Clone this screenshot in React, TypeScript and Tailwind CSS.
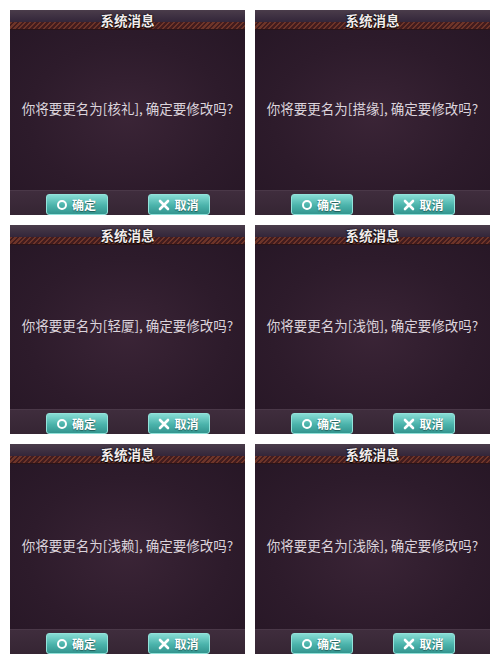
import React from 'react';

const names = ['核礼', '搭缘', '轻厦', '浅饱', '浅赖', '浅除'];
const rowHeights = ['h-[205px]', 'h-[209px]', 'h-[210px]'];

const Panel: React.FC<{ name: string; height: string }> = ({ name, height }) => (
  <div className={`${height} flex flex-col overflow-hidden bg-[#2c1b2a]`}>
    {/* Title bar */}
    <div className="relative h-[20px] shrink-0 flex flex-col">
      <div className="h-[12px] bg-[linear-gradient(#4a3c4a,#33263a)]" />
      <div className="h-[8px] bg-[repeating-linear-gradient(135deg,#6e3529_0px,#6e3529_1.5px,#421c1e_1.5px,#421c1e_3.5px)] border-b border-[#2a1418]" />
      <span className="absolute inset-x-0 top-[1px] text-center text-[13.5px] leading-[18px] font-bold text-[#f2ecec] [text-shadow:0_1px_1px_#000,0_0_2px_#000]">
        系统消息
      </span>
    </div>

    {/* Message */}
    <div className="flex-1 flex items-center justify-center pb-[3px] bg-[radial-gradient(ellipse_at_50%_55%,#3a2436_0%,#2d1b2b_60%,#271726_100%)]">
      <p className="text-[13.5px] text-[#dcd4dc]">
        你将要更名为[{name}], 确定要修改吗?
      </p>
    </div>

    {/* Buttons */}
    <div className="h-[25px] shrink-0 flex justify-center gap-[40px] pt-[3px] bg-[linear-gradient(#3f2d3d,#352533)] border-t border-[#4a3848]">
      <button className="w-[62px] h-[21px] flex items-center justify-center gap-[5px] rounded-[3px] border border-[#93e2da] bg-[linear-gradient(#86dcd4,#4bb3ab_55%,#33958f)] text-white text-[12px] font-bold [text-shadow:0_1px_1px_#1e5a56]">
        <span className="w-[10px] h-[10px] rounded-full border-[2px] border-white" />
        确定
      </button>
      <button className="w-[62px] h-[21px] flex items-center justify-center gap-[4px] rounded-[3px] border border-[#93e2da] bg-[linear-gradient(#86dcd4,#4bb3ab_55%,#33958f)] text-white text-[12px] font-bold [text-shadow:0_1px_1px_#1e5a56]">
        <svg width="12" height="12" viewBox="0 0 12 12">
          <path d="M2 2 L10 10 M10 2 L2 10" stroke="white" strokeWidth="2.6" strokeLinecap="round" />
        </svg>
        取消
      </button>
    </div>
  </div>
);

export default function App() {
  return (
    <div className="w-[500px] h-[655px] overflow-hidden bg-white pt-[10px] pl-[10px] font-['Noto_Sans_CJK_SC','Noto_Sans',sans-serif]">
      <div className="grid grid-cols-[235px_235px] gap-x-[10px] gap-y-[10px]">
        {names.map((n, i) => (
          <Panel key={n} name={n} height={rowHeights[Math.floor(i / 2)]} />
        ))}
      </div>
    </div>
  );
}
